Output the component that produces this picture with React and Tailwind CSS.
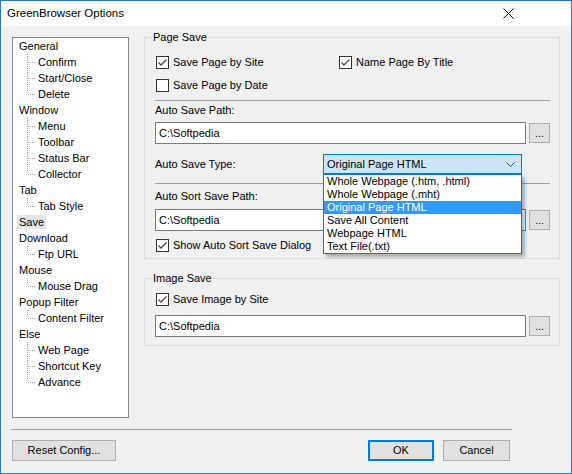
import React from "react";

// Tree of option pages
const tree = [
  ["General", ["Confirm", "Start/Close", "Delete"]],
  ["Window", ["Menu", "Toolbar", "Status Bar", "Collector"]],
  ["Tab", ["Tab Style"]],
  ["Save", []],
  ["Download", ["Ftp URL"]],
  ["Mouse", ["Mouse Drag"]],
  ["Popup Filter", ["Content Filter"]],
  ["Else", ["Web Page", "Shortcut Key", "Advance"]],
];

const saveTypes = [
  "Whole Webpage (.htm, .html)",
  "Whole Webpage (.mht)",
  "Original Page HTML",
  "Save All Content",
  "Webpage HTML",
  "Text File(.txt)",
];

const Connector = ({ last }) => (
  <svg width="19" height="16" className="shrink-0">
    <line x1="8.5" y1="0" x2="8.5" y2={last ? 8 : 16} stroke="#a0a0a0" strokeDasharray="1 1" />
    <line x1="9" y1="8.5" x2="17" y2="8.5" stroke="#a0a0a0" strokeDasharray="1 1" />
  </svg>
);

const Checkbox = ({ checked, label }) => (
  <div className="flex items-center h-[13px]">
    <div className="w-[13px] h-[13px] ml-[1px] border border-[#333] bg-white shrink-0">
      {checked && (
        <svg width="11" height="11" viewBox="0 0 11 11">
          <polyline points="1.5,5.5 4,8 9.5,2.5" fill="none" stroke="#4a4a4a" strokeWidth="1.3" />
        </svg>
      )}
    </div>
    <span className="ml-[4px] leading-[13px]">{label}</span>
  </div>
);

const PathRow = () => (
  <div className="flex items-center h-[22px]">
    <div className="flex-1 h-[22px] border border-[#7a7a7a] bg-white flex items-center pl-[3px]">
      C:\Softpedia
    </div>
    <button className="ml-[3px] w-[21px] h-[20px] border border-[#adadad] bg-[#e1e1e1] text-[11px] leading-[12px]">
      ...
    </button>
  </div>
);

const Group = ({ title, children, className }) => (
  <fieldset className={"border border-[#dcdcdc] p-0 " + className}>
    <legend className="ml-[7px] px-[1px] leading-[14px]">{title}</legend>
    {children}
  </fieldset>
);

export default function App() {
  return (
    <div
      className="w-[572px] h-[474px] border border-[#1c7ad0] bg-[#f0f0f0] flex flex-col text-[11px] text-black"
      style={{ fontFamily: '"Liberation Sans", Arial, sans-serif' }}
    >
      {/* title bar */}
      <div className="h-[25px] bg-white flex items-center justify-between pl-[6px] shrink-0">
        <span className="text-[11.5px]">GreenBrowser Options</span>
        <svg width="11" height="11" className="mr-[57px]">
          <path d="M0.5 0.5 L10.5 10.5 M10.5 0.5 L0.5 10.5" stroke="#000" strokeWidth="1" />
        </svg>
      </div>

      <div className="flex-1 flex flex-col px-[11px] pt-[11px]">
        <div className="flex">
          {/* tree */}
          <div className="w-[117px] h-[381px] border border-[#828790] bg-white pl-[6px] shrink-0">
            {tree.map(([parent, kids]) => (
              <div key={parent}>
                <div className="h-[16px] leading-[16px] flex">
                  <span className={parent === "Save" ? "bg-[#e5e5e5] px-[2px] -mx-[2px] my-[1px] leading-[14px]" : ""}>
                    {parent}
                  </span>
                </div>
                {kids.map((k, i) => (
                  <div key={k} className="h-[16px] flex items-center">
                    <Connector last={i === kids.length - 1} />
                    <span className="leading-[16px]">{k}</span>
                  </div>
                ))}
              </div>
            ))}
          </div>

          {/* right panel */}
          <div className="ml-[15px] w-[416px] flex flex-col">
            <Group title="Page Save" className="-mt-[7px]">
              <div className="pl-[10px] pr-[9px] pb-[6px]">
                <div className="mt-[12px] flex">
                  <div className="w-[183px]">
                    <Checkbox checked label="Save Page by Site" />
                  </div>
                  <Checkbox checked label="Name Page By Title" />
                </div>
                <div className="mt-[10px]">
                  <Checkbox label="Save Page by Date" />
                </div>
                <div className="mt-[8px] border-t border-[#a0a0a0]" />
                <div className="mt-[3px] leading-[13px]">Auto Save Path:</div>
                <div className="mt-[5px]">
                  <PathRow />
                </div>
                <div className="mt-[10px] flex items-center h-[20px]">
                  <div className="w-[168px]">Auto Save Type:</div>
                  <div className="relative w-[199px]">
                    <div className="h-[20px] border border-[#0078d7] bg-[#cce4f7] flex items-center justify-between pl-[3px] pr-[6px]">
                      <span>Original Page HTML</span>
                      <svg width="9" height="5" viewBox="0 0 9 5">
                        <polyline points="0.5,0.5 4.5,4.5 8.5,0.5" fill="none" stroke="#444" strokeWidth="1" />
                      </svg>
                    </div>
                    <div className="absolute left-0 top-full w-full border border-[#0078d7] bg-white shadow-[3px_3px_3px_rgba(0,0,0,0.28)] z-10">
                      {saveTypes.map((t) => (
                        <div
                          key={t}
                          className={
                            "h-[13px] leading-[13px] pl-[3px] whitespace-nowrap " +
                            (t === "Original Page HTML" ? "bg-[#3399ff] text-white" : "")
                          }
                        >
                          {t}
                        </div>
                      ))}
                    </div>
                  </div>
                </div>
                <div className="mt-[9px] border-t border-[#a0a0a0]" />
                <div className="mt-[6px] leading-[13px]">Auto Sort Save Path:</div>
                <div className="mt-[6px]">
                  <PathRow />
                </div>
                <div className="mt-[8px]">
                  <Checkbox checked label="Show Auto Sort Save Dialog" />
                </div>
              </div>
            </Group>

            <Group title="Image Save" className="mt-[12px]">
              <div className="pl-[10px] pr-[9px] pb-[8px]">
                <div className="mt-[8px]">
                  <Checkbox checked label="Save Image by Site" />
                </div>
                <div className="mt-[9px]">
                  <PathRow />
                </div>
              </div>
            </Group>
          </div>
        </div>

        {/* footer */}
        <div className="mt-[11px] w-[501px] -ml-[1px] border-t border-[#a0a0a0]" />
        <div className="mt-[10px] w-[498px] flex justify-between">
          <button className="w-[104px] h-[21px] border border-[#adadad] bg-[#e1e1e1]">Reset Config...</button>
          <div className="flex gap-[9px]">
            <button className="w-[66px] h-[21px] border-2 border-[#0078d7] bg-[#e1e1e1]">OK</button>
            <button className="w-[67px] h-[21px] border border-[#adadad] bg-[#e1e1e1]">Cancel</button>
          </div>
        </div>
      </div>
    </div>
  );
}
